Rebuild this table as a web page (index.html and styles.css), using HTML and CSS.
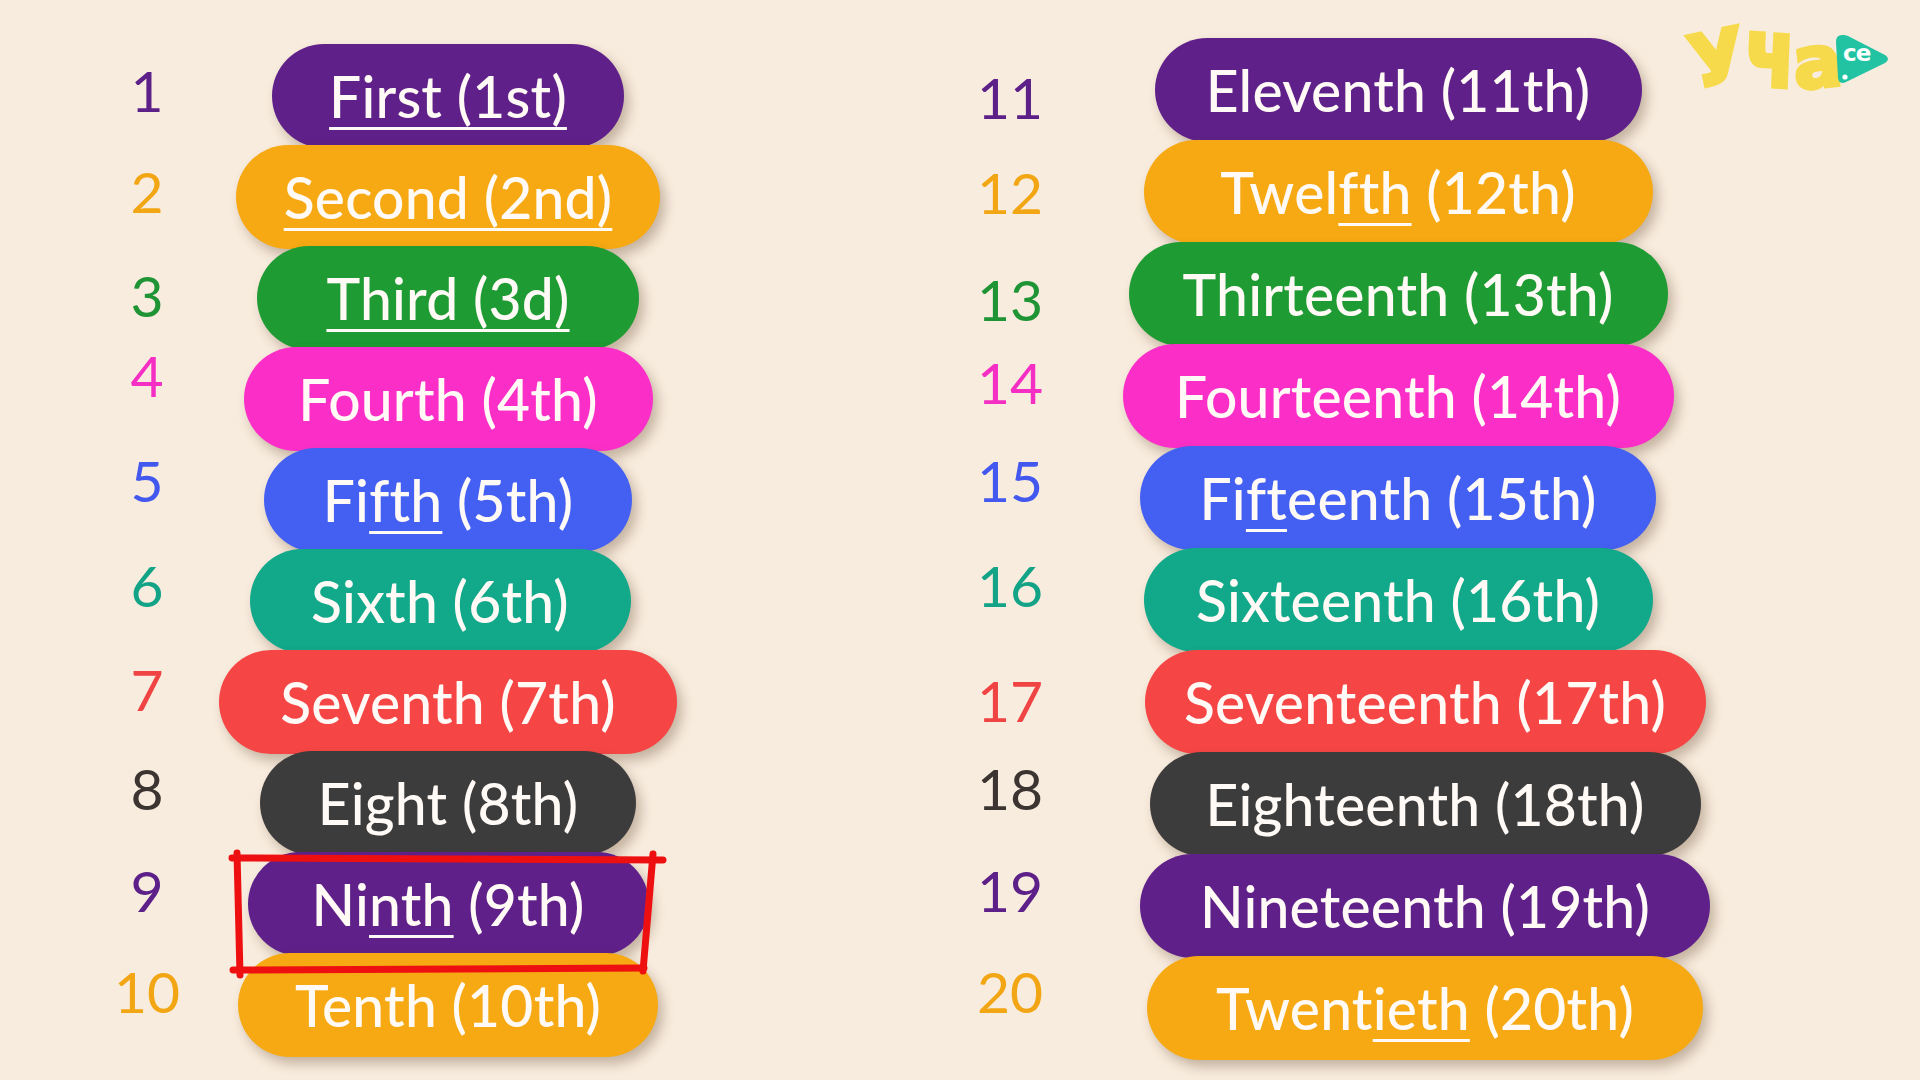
FILE: index.html
```html
<!DOCTYPE html>
<html lang="en">
<head>
<meta charset="utf-8">
<title>Ordinal numbers 1–20</title>
<link rel="stylesheet" href="styles.css">
</head>
<body>
<main class="page">
  <section class="col col-left">
    <div class="row"><span class="num purple">1</span><div class="slot"><div class="pill bg-purple w352"><span class="u">First (1st)</span></div></div></div>
    <div class="row"><span class="num orange">2</span><div class="slot"><div class="pill bg-orange w424"><span class="u">Second (2nd)</span></div></div></div>
    <div class="row"><span class="num green">3</span><div class="slot"><div class="pill bg-green w382"><span class="u">Third (3d)</span></div></div></div>
    <div class="row"><span class="num pink">4</span><div class="slot"><div class="pill bg-pink w409">Fourth (4th)</div></div></div>
    <div class="row"><span class="num blue">5</span><div class="slot"><div class="pill bg-blue w368">Fi<span class="u">fth</span>&nbsp;(5th)</div></div></div>
    <div class="row"><span class="num teal">6</span><div class="slot"><div class="pill bg-teal w381 nudge-l">Sixth (6th)</div></div></div>
    <div class="row"><span class="num red">7</span><div class="slot"><div class="pill bg-red w458">Seventh (7th)</div></div></div>
    <div class="row"><span class="num dark">8</span><div class="slot"><div class="pill bg-dark w376">Eight (8th)</div></div></div>
    <div class="row"><span class="num purple">9</span><div class="slot"><div class="pill bg-purple w401">Ni<span class="u">nth</span>&nbsp;(9th)</div></div></div>
    <div class="row"><span class="num orange">10</span><div class="slot"><div class="pill bg-orange w420">Tenth (10th)</div></div></div>
  </section>

  <section class="col col-right">
    <div class="row"><span class="num purple">11</span><div class="slot"><div class="pill bg-purple w487">Eleventh (11th)</div></div></div>
    <div class="row"><span class="num orange">12</span><div class="slot"><div class="pill bg-orange w509">Twel<span class="u">fth</span>&nbsp;(12th)</div></div></div>
    <div class="row"><span class="num green">13</span><div class="slot"><div class="pill bg-green w539">Thirteenth (13th)</div></div></div>
    <div class="row"><span class="num pink">14</span><div class="slot"><div class="pill bg-pink w551">Fourteenth (14th)</div></div></div>
    <div class="row"><span class="num blue">15</span><div class="slot"><div class="pill bg-blue w516">Fi<span class="u">ft</span>eenth (15th)</div></div></div>
    <div class="row"><span class="num teal">16</span><div class="slot"><div class="pill bg-teal w509">Sixteenth (16th)</div></div></div>
    <div class="row"><span class="num red">17</span><div class="slot"><div class="pill bg-red w561 shift">Seventeenth (17th)</div></div></div>
    <div class="row"><span class="num dark">18</span><div class="slot"><div class="pill bg-dark w551 shift">Eighteenth (18th)</div></div></div>
    <div class="row"><span class="num purple">19</span><div class="slot"><div class="pill bg-purple w570 shift">Nineteenth (19th)</div></div></div>
    <div class="row"><span class="num orange">20</span><div class="slot"><div class="pill bg-orange w556 shift">Twent<span class="u">ieth</span>&nbsp;(20th)</div></div></div>
  </section>

  <svg class="mark" width="450" height="134" viewBox="0 0 450 134" aria-hidden="true">
    <path d="M4 10 L435 12" />
    <path d="M425 6 L415 123" />
    <path d="M5 122 L416 120" />
    <path d="M9 5 L12 127" />
  </svg>

  <div class="logo" aria-label="Уча.се">
    <span class="logo-word"><span class="l1">У</span><span class="l2">ч</span><span class="l3">а</span></span>
    <span class="logo-play">
      <svg class="play-bg" width="58" height="54" viewBox="0 0 58 54" aria-hidden="true">
        <path d="M9 2 Q3 2 3 9 L5 45 Q6 52 13 49 L52 30 Q58 26 52 22 L15 3 Q12 1.5 9 2 Z" />
        <circle cx="12" cy="44" r="2.6" class="dot" />
      </svg>
      <span class="play-text">се</span>
    </span>
  </div>
</main>
</body>
</html>
```

FILE: styles.css
```css
html, body {
  margin: 0;
  padding: 0;
}

body {
  background: #f8ecde;
  font-family: "Lato", "Open Sans", "DejaVu Sans", sans-serif;
  overflow: hidden;
}

.page {
  position: relative;
  width: 1920px;
  height: 1080px;
  display: flex;
  background: #f8ecde;
}

.col {
  display: flex;
  flex-direction: column;
}

.col-left {
  width: 863px;
  padding-left: 97px;
  padding-top: 44px;
}

.col-right {
  padding-top: 38px;
}

.row {
  display: grid;
  align-items: center;
  height: 104px;
}

.col-left .row {
  grid-template-columns: 100px 502px;
}

.col-right .row {
  grid-template-columns: 100px 676px;
}

.col-left .row + .row {
  margin-top: -3px;
}

.col-right .row + .row {
  margin-top: -2px;
}

.num {
  text-align: center;
  font-size: 57px;
  font-weight: 400;
  line-height: 1;
}

/* per-row offsets of the numerals relative to their pill */
.col-left .row:nth-child(1) .num { transform: translateY(-6px); }
.col-left .row:nth-child(2) .num { transform: translateY(-6px); }
.col-left .row:nth-child(3) .num { transform: translateY(-3px); }
.col-left .row:nth-child(4) .num { transform: translateY(-24px); }
.col-left .row:nth-child(5) .num { transform: translateY(-20px); }
.col-left .row:nth-child(6) .num { transform: translateY(-16px); }
.col-left .row:nth-child(7) .num { transform: translateY(-13px); }
.col-left .row:nth-child(8) .num { transform: translateY(-15px); }
.col-left .row:nth-child(9) .num { transform: translateY(-14px); }
.col-left .row:nth-child(10) .num { transform: translateY(-14px); }

.col-right .row:nth-child(1) .num { transform: translateY(7px); }
.col-right .row:nth-child(2) .num { transform: translateY(0); }
.col-right .row:nth-child(3) .num { transform: translateY(5px); }
.col-right .row:nth-child(4) .num { transform: translateY(-14px); }
.col-right .row:nth-child(5) .num { transform: translateY(-18px); }
.col-right .row:nth-child(6) .num { transform: translateY(-15px); }
.col-right .row:nth-child(7) .num { transform: translateY(-2px); }
.col-right .row:nth-child(8) .num { transform: translateY(-16px); }
.col-right .row:nth-child(9) .num { transform: translateY(-16px); }
.col-right .row:nth-child(10) .num { transform: translateY(-17px); }

.slot {
  display: flex;
  justify-content: center;
  align-items: center;
  height: 104px;
}

.pill {
  position: relative;
  box-sizing: border-box;
  height: 104px;
  border-radius: 52px;
  display: flex;
  justify-content: center;
  align-items: center;
  color: #fffaf6;
  font-size: 57px;
  font-weight: 500;
  white-space: nowrap;
  letter-spacing: 0.2px;
  box-shadow: 5px 7px 12px rgba(90, 60, 30, 0.32);
}

.u {
  text-decoration: underline;
  text-decoration-thickness: 3px;
  text-underline-offset: 9px;
  text-decoration-skip-ink: none;
}

.shift { margin-left: 54px; }
.nudge-l { margin-right: 16px; }

.w352 { width: 352px; }
.w368 { width: 368px; }
.w376 { width: 376px; }
.w381 { width: 381px; }
.w382 { width: 382px; }
.w401 { width: 401px; }
.w409 { width: 409px; }
.w420 { width: 420px; }
.w424 { width: 424px; }
.w458 { width: 458px; }
.w487 { width: 487px; }
.w509 { width: 509px; }
.w516 { width: 516px; }
.w539 { width: 539px; }
.w551 { width: 551px; }
.w556 { width: 556px; }
.w561 { width: 561px; }
.w570 { width: 570px; }

.purple { color: #5d2088; }
.orange { color: #f2a614; }
.green { color: #1f9435; }
.pink { color: #f52ec4; }
.blue { color: #4358ee; }
.teal { color: #13a386; }
.red { color: #f04343; }
.dark { color: #3b3431; }

.bg-purple { background: #5f2189; }
.bg-orange { background: #f6a912; }
.bg-green { background: #1f9b33; }
.bg-pink { background: #fb2fc7; }
.bg-blue { background: #4460f3; }
.bg-teal { background: #12a88a; }
.bg-red { background: #f54545; }
.bg-dark { background: #3d3c3c; }

/* hand-drawn highlight frame over the ninth item */
.mark {
  position: absolute;
  left: 228px;
  top: 848px;
  overflow: visible;
}

.mark path {
  fill: none;
  stroke: #ee1010;
  stroke-width: 7;
  stroke-linecap: round;
}

/* logo */
.logo {
  position: absolute;
  left: 1690px;
  top: 22px;
  width: 205px;
  height: 84px;
}

.logo-word {
  position: absolute;
  left: 0;
  top: 0;
  display: flex;
  align-items: flex-end;
  font-family: "DejaVu Sans", sans-serif;
  font-weight: 700;
  color: #f7da4c;
  -webkit-text-stroke: 4px #f7da4c;
  line-height: 1;
}

.l1 {
  display: inline-block;
  font-size: 72px;
  transform: rotate(-12deg);
  margin-right: -2px;
}

.l2 {
  display: inline-block;
  font-size: 72px;
  transform: translateY(6px) scaleY(1.3) rotate(3deg);
  transform-origin: 50% 100%;
}

.l3 {
  display: inline-block;
  font-size: 72px;
  transform: translateY(4px) rotate(-6deg);
}

.logo-play {
  position: absolute;
  left: 143px;
  top: 11px;
  width: 58px;
  height: 54px;
}

.play-bg {
  position: absolute;
  left: 0;
  top: 0;
}

.play-bg path { fill: #22c3a3; }
.play-bg .dot { fill: #ffffff; }

.play-text {
  position: absolute;
  left: 10px;
  top: 9px;
  font-family: "DejaVu Sans", sans-serif;
  font-weight: 700;
  font-size: 23px;
  line-height: 1;
  color: #ffffff;
  letter-spacing: -1px;
}
```
